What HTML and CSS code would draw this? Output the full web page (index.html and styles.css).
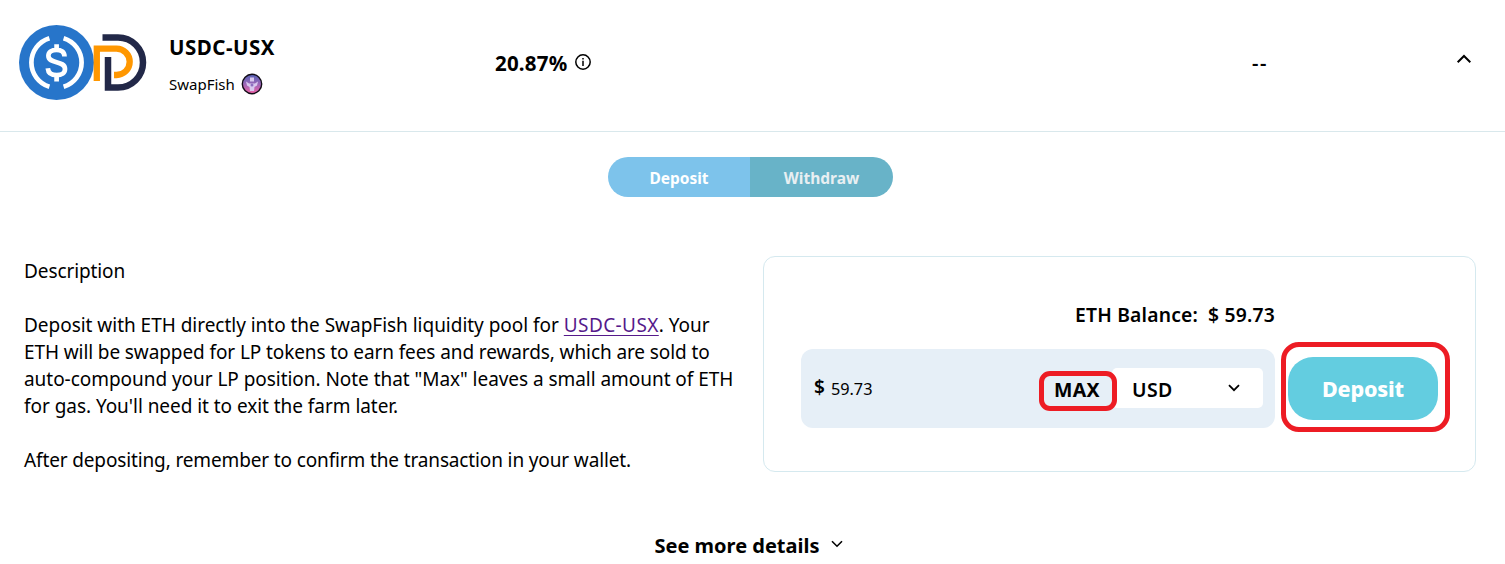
FILE: index.html
```html
<!DOCTYPE html>
<html lang="en">
<head>
<meta charset="utf-8">
<title>USDC-USX</title>
<link rel="stylesheet" href="styles.css">
</head>
<body>
<header class="farm-header">
  <svg class="pair-logo" width="128" height="76" viewBox="0 0 128 76">
    <circle cx="37.5" cy="37.5" r="37.5" fill="#2775ca"/>
    <g fill="none" stroke="#fff" stroke-width="4.7">
      <path d="M30.400 13.200A25.400 25.400 0 0 0 30.400 61.800M44.600 13.200A25.400 25.400 0 0 1 44.600 61.800"/>
      <path d="M45.5 31.5C45.5 26.8 42 24.8 37.5 24.8C32.8 24.8 29.4 27 29.4 30.8C29.4 39.5 46 34.8 46 44C46 48 42.5 50.2 37.8 50.2C32.5 50.2 29.2 48 28.8 43.2M37.6 19.3V26M37.6 49V56.5"/>
    </g>
    <g fill="none">
      <path d="M77.800 56V23.600H97.500A13.200 13.200 0 0 1 97.500 50H95" stroke="#ff9700" stroke-width="6.3"/>
      <path d="M83.5 12.5H99A25 25 0 0 1 99 62.5H89V32" stroke="#222848" stroke-width="6.5"/>
    </g>
  </svg>
  <div class="farm-name">
    <div class="pair">USDC-USX</div>
    <div class="platform"><span class="platform-name">SwapFish</span>
      <svg width="22" height="22" viewBox="0 0 22 22"><defs><linearGradient id="fish" x2="0" y2="1"><stop offset="0" stop-color="#5362b5"/><stop offset=".5" stop-color="#9b67b8"/><stop offset="1" stop-color="#f062a5"/></linearGradient></defs><circle cx="11" cy="11" r="9.7" fill="url(#fish)" stroke="#120c18" stroke-width="1.4"/><path d="M9 4.500h4v4H9zM5 8.500l3 2h6l3-2-1 4-2.500 1.500-.5 4h-4l-.5-4L6 12.500z" fill="#d8c8ee"/><circle cx="11" cy="12" r="1.500" fill="#8d6fc0"/></svg>
    </div>
  </div>
  <div class="apy"><span class="apy-value">20.87%</span>
    <svg width="18" height="18" viewBox="0 0 18 18" fill="none" stroke="#000" stroke-width="1.5"><circle cx="9" cy="9" r="7.2"/><path d="M9 7.800V13M9 5V6.500"/></svg>
  </div>
  <div class="staked">--</div>
  <svg class="collapse" width="16" height="10" viewBox="0 0 16 10" fill="none" stroke="#000" stroke-width="2"><path d="M1.700 8.300L8 2L14.300 8.300"/></svg>
</header>
<main>
  <nav class="tabs"><button class="tab tab-active">Deposit</button><button class="tab tab-idle">Withdraw</button></nav>
  <div class="columns">
    <section class="description">
      <p class="l0">Description</p>
      <p><span class="l1">Deposit with ETH directly into the SwapFish liquidity pool for <a href="#">USDC-USX</a>. Your</span><br><span class="l2">ETH will be swapped for LP tokens to earn fees and rewards, which are sold to</span><br><span class="l3">auto-compound your LP position. Note that "Max" leaves a small amount of ETH</span><br><span class="l4">for gas. You'll need it to exit the farm later.</span></p>
      <p class="l5">After depositing, remember to confirm the transaction in your wallet.</p>
    </section>
    <section class="card">
      <div class="balance"><span>ETH Balance:</span><span>$ 59.73</span></div>
      <div class="entry">
        <div class="amount">
          <span class="currency">$</span><span class="value">59.73</span>
          <span class="max">MAX</span>
          <div class="select"><span>USD</span><svg width="12" height="8" viewBox="0 0 12 8" fill="none" stroke="#000" stroke-width="1.8"><path d="M1 1.200L6 6.200L11 1.200"/></svg></div>
        </div>
        <div class="action"><button class="deposit">Deposit</button></div>
      </div>
    </section>
  </div>
  <div class="more"><span>See more details</span><svg width="12" height="8" viewBox="0 0 12 8" fill="none" stroke="#000" stroke-width="1.600"><path d="M1 1.200L6 6.200L11 1.200"/></svg></div>
</main>
</body>
</html>
```
FILE: styles.css
```css
* { box-sizing: border-box; }
body { margin: 0; height: 564px; overflow: hidden; background: #fff; color: #000; font-family: "Noto Sans", "Open Sans", sans-serif; }
svg { display: block; flex: none; }
button { border: 0; padding: 0; font-family: inherit; }
.farm-header { display: flex; height: 132px; border-bottom: 1px solid #d9e8ec; white-space: nowrap; }
.pair-logo { margin: 25px 0 0 19px; }
.farm-name { width: 326px; padding: 34px 0 0 22px; }
.farm-name, .apy, .staked { flex: none; }
.pair { font-size: 20.500px; line-height: 27px; font-weight: 700; letter-spacing: .5px; }
.platform { display: flex; align-items: center; gap: 6px; margin-top: 12px; font-size: 15px; line-height: 22px; }
.apy { display: flex; gap: 7px; width: 779px; padding-top: 49px; padding-left: 22px; font-size: 20.500px; line-height: 29px; font-weight: 700; letter-spacing: .2px; }
.apy svg { margin-top: 4px; }
.staked { width: 204px; padding-top: 49px; font-size: 20px; line-height: 27px; font-weight: 600; letter-spacing: 1.5px; }
.collapse { margin-top: 54px; }
.tabs { display: flex; width: 285px; height: 40px; margin: 25px 0 0 608px; border-radius: 20px; overflow: hidden; }
.tab { flex: none; width: 142px; padding-top: 2px; font-size: 15.500px; font-weight: 700; }
.tab-active { background: #7dc3eb; color: #fff; }
.tab-idle { width: 143px; background: #68b3c8; color: #e8eff2; }
.columns { display: flex; margin-top: 59px; height: 216px; }
.description { width: 763px; flex: none; padding: 2px 0 0 24px; font-size: 19px; line-height: 27px; white-space: nowrap; }
.description p { margin: 0 0 27px; }
.description .l0 { letter-spacing: -.1px; }
.l1 { letter-spacing: -.025px; }
.l2 { letter-spacing: -.1px; }
.l3, .l4 { letter-spacing: -.045px; }
.description .l5 { letter-spacing: -.135px; }
.description a { color: #551a8b; letter-spacing: .4px; text-decoration-thickness: 1px; text-underline-offset: 3px; }
.card { width: 713px; flex: none; padding: 44px 25px 0 37px; border: 1px solid #d5e9ef; border-radius: 12px; }
.balance { display: flex; justify-content: flex-end; gap: 10px; padding-right: 175px; font-size: 19.300px; line-height: 27px; font-weight: 600; letter-spacing: .2px; }
.entry { display: flex; align-items: center; gap: 6px; margin-top: 14px; height: 90px; }
.amount { display: flex; align-items: center; flex: none; width: 474px; height: 79px; padding: 0 12px 0 13px; border-radius: 12px; background: #e6eff7; margin-top: 3px; }
.currency { font-size: 19px; font-weight: 600; margin-right: 6px; margin-top: -3px; }
.value { font-size: 16.300px; }
.max { display: flex; align-items: center; justify-content: center; width: 78px; height: 40px; margin: 4px -5px 0 auto; padding: 0 2px 2px 0; border: 5px solid #ed1c24; border-radius: 11px; font-size: 19.500px; font-weight: 700; letter-spacing: .4px; z-index: 1; }
.select { display: flex; align-items: center; justify-content: space-between; width: 151px; height: 40px; margin-top: -1px; padding: 3px 23px 0 20px; border-radius: 5px; background: #fff; font-size: 19.500px; font-weight: 600; letter-spacing: .4px; }
.select svg { margin-top: -4px; }
.action { width: 169px; flex: none; height: 90px; border: 5px solid #ed1c24; border-radius: 18px; padding: 10px 0 0 2px; }
.deposit { display: block; width: 150px; height: 63px; border-radius: 25px; background: #63cde0; color: #fff; font-size: 21.500px; font-weight: 800; letter-spacing: -.2px; }
.more { display: flex; gap: 11px; margin: 60px 0 0 654.500px; font-size: 20px; line-height: 28px; font-weight: 700; }
.more svg { margin-top: 8px; }
```
